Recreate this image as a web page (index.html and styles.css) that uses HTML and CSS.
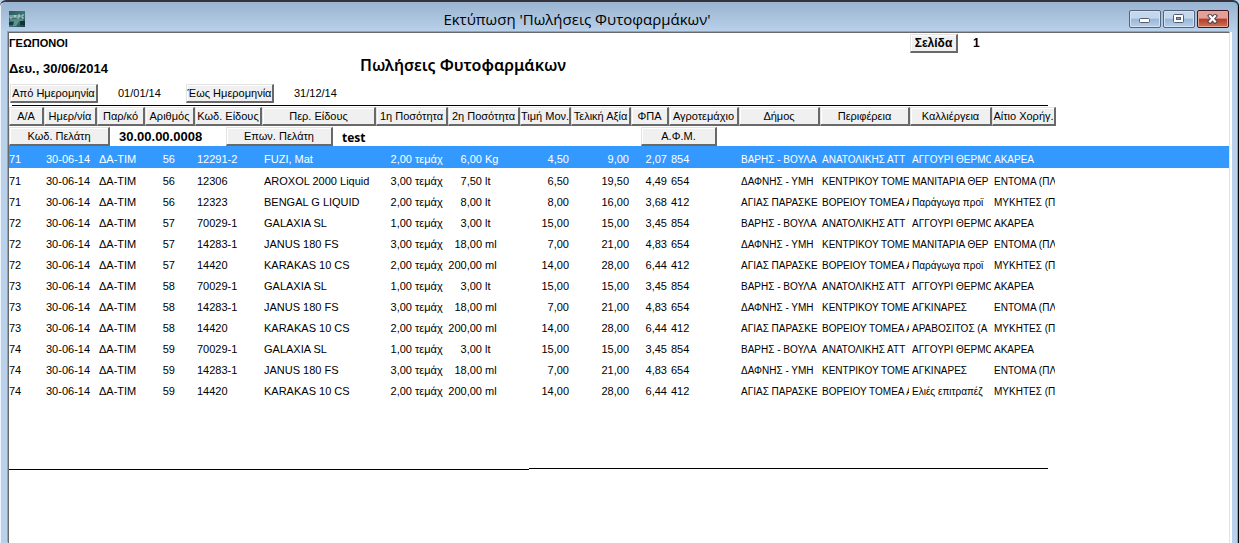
FILE: index.html
```html
<!DOCTYPE html>
<html lang="el">
<head>
<meta charset="utf-8">
<title>Εκτύπωση 'Πωλήσεις Φυτοφαρμάκων'</title>
<link rel="stylesheet" href="styles.css">
</head>
<body>
<div class="window">
  <header class="titlebar">
    <svg class="app-icon" viewBox="0 0 16 16" aria-hidden="true">
      <defs><linearGradient id="g" x1="0" y1="0" x2="1" y2="1"><stop offset="0" stop-color="#2c5b5c"/><stop offset=".6" stop-color="#3f7778"/><stop offset="1" stop-color="#123c40"/></linearGradient></defs>
      <rect width="16" height="16" fill="url(#g)"/>
      <path d="M0 11h5v3H0z" fill="#143f43"/><path d="M5 10h5l-3 5H4z" fill="#5f9492"/><path d="M11 10h5v4h-5z" fill="#0f3438"/>
      <path d="M1 4v3h2V4M5 7V4l1 2 1-2v3M9 8V4h2v2H9M13 4v3h2M13 4h2" fill="none" stroke="#b9cfce"/>
      <path d="M1 9h13" stroke="#7fa5a4"/>
    </svg>
    <h1 class="window-title">Εκτύπωση 'Πωλήσεις Φυτοφαρμάκων'</h1>
    <div class="window-controls">
      <button class="control" aria-label="Ελαχιστοποίηση"><svg viewBox="0 0 12 10"><rect x=".5" y="4.5" width="10" height="4" rx="1" fill="#fff" stroke="#555c6b"/></svg></button>
      <button class="control" aria-label="Μεγιστοποίηση"><svg viewBox="0 0 12 10"><rect x=".5" y=".5" width="10" height="8" rx="1" fill="#fff" stroke="#555c6b"/><rect x="3.500" y="3.500" width="4" height="2" fill="#7fa4cc" stroke="#555c6b"/></svg></button>
      <button class="control close" aria-label="Κλείσιμο"><svg viewBox="0 0 12 10"><path d="M3 2l5 5.500M8 2l-5 5.500" stroke="#4b4652" stroke-width="4.200" stroke-linecap="square"/><path d="M3 2l5 5.500M8 2l-5 5.500" stroke="#fff" stroke-width="2.200" stroke-linecap="square"/></svg></button>
    </div>
  </header>
  <main class="report">
    <div class="company-row">
      <strong class="company">ΓΕΩΠΟΝΟΙ</strong>
      <button class="raised page-label">Σελίδα</button>
      <strong class="page-number">1</strong>
    </div>
    <div class="heading-row">
      <strong class="date">Δευ., 30/06/2014</strong>
      <h2 class="report-title">Πωλήσεις Φυτοφαρμάκων</h2>
    </div>
    <div class="period-row">
      <button class="raised period-label">Από Ημερομηνία</button>
      <span class="period-date">01/01/14</span>
      <button class="raised period-label">Έως Ημερομηνία</button>
      <span class="period-date">31/12/14</span>
    </div>
    <hr class="rule top-rule">
    <table class="sales">
      <colgroup>
        <col class="c-aa"><col class="c-date"><col class="c-doc"><col class="c-num"><col class="c-code"><col class="c-name"><col class="c-qty"><col class="c-qty"><col class="c-price"><col class="c-total"><col class="c-vat"><col class="c-plot"><col class="c-town"><col class="c-region"><col class="c-crop"><col class="c-cause"><col>
      </colgroup>
      <thead>
        <tr>
          <th><button class="raised">Α/Α</button></th>
          <th><button class="raised">Ημερ/νία</button></th>
          <th><button class="raised">Παρ/κό</button></th>
          <th><button class="raised">Αριθμός</button></th>
          <th><button class="raised">Κωδ. Είδους</button></th>
          <th><button class="raised">Περ. Είδους</button></th>
          <th><button class="raised">1η Ποσότητα</button></th>
          <th><button class="raised">2η Ποσότητα</button></th>
          <th><button class="raised">Τιμή Μον.</button></th>
          <th><button class="raised">Τελική Αξία</button></th>
          <th><button class="raised">ΦΠΑ</button></th>
          <th><button class="raised">Αγροτεμάχιο</button></th>
          <th><button class="raised">Δήμος</button></th>
          <th><button class="raised">Περιφέρεια</button></th>
          <th><button class="raised">Καλλιέργεια</button></th>
          <th><button class="raised">Αίτιο Χορήγ.</button></th>
          <th></th>
        </tr>
        <tr class="client">
          <th colspan="17">
            <div class="client-row">
              <button class="raised client-code-label">Κωδ. Πελάτη</button>
              <strong class="client-code">30.00.00.0008</strong>
              <button class="raised client-name-label">Επων. Πελάτη</button>
              <strong class="client-name">test</strong>
              <button class="raised tax-label">Α.Φ.Μ.</button>
            </div>
          </th>
        </tr>
      </thead>
      <tbody>
        <tr class="selected"><td>71</td><td>30-06-14</td><td>ΔΑ-ΤΙΜ</td><td class="doc-no">56</td><td>12291-2</td><td>FUZI, Mat</td><td><span class="amount">2,00</span>τεμάχ</td><td class="second"><span class="amount">6,00</span>Kg</td><td class="num">4,50</td><td class="num">9,00</td><td class="num">2,07</td><td>854</td><td class="place">ΒΑΡΗΣ - ΒΟΥΛΑ</td><td class="place">ΑΝΑΤΟΛΙΚΗΣ ΑΤΤ</td><td class="place">ΑΓΓΟΥΡΙ ΘΕΡΜΟ</td><td class="place">ΑΚΑΡΕΑ</td><td></td></tr>
        <tr><td>71</td><td>30-06-14</td><td>ΔΑ-ΤΙΜ</td><td class="doc-no">56</td><td>12306</td><td>AROXOL 2000 Liquid</td><td><span class="amount">3,00</span>τεμάχ</td><td class="second"><span class="amount">7,50</span>lt</td><td class="num">6,50</td><td class="num">19,50</td><td class="num">4,49</td><td>654</td><td class="place">ΔΑΦΝΗΣ - ΥΜΗ</td><td class="place">ΚΕΝΤΡΙΚΟΥ ΤΟΜΕ</td><td class="place">ΜΑΝΙΤΑΡΙΑ ΘΕΡ</td><td class="place">ΕΝΤΟΜΑ (ΠΛ</td><td></td></tr>
        <tr><td>71</td><td>30-06-14</td><td>ΔΑ-ΤΙΜ</td><td class="doc-no">56</td><td>12323</td><td>BENGAL G LIQUID</td><td><span class="amount">2,00</span>τεμάχ</td><td class="second"><span class="amount">8,00</span>lt</td><td class="num">8,00</td><td class="num">16,00</td><td class="num">3,68</td><td>412</td><td class="place">ΑΓΙΑΣ ΠΑΡΑΣΚΕ</td><td class="place">ΒΟΡΕΙΟΥ ΤΟΜΕΑ Α</td><td class="place">Παράγωγα προϊ</td><td class="place">ΜΥΚΗΤΕΣ (Π</td><td></td></tr>
        <tr><td>72</td><td>30-06-14</td><td>ΔΑ-ΤΙΜ</td><td class="doc-no">57</td><td>70029-1</td><td>GALAXIA SL</td><td><span class="amount">1,00</span>τεμάχ</td><td class="second"><span class="amount">3,00</span>lt</td><td class="num">15,00</td><td class="num">15,00</td><td class="num">3,45</td><td>854</td><td class="place">ΒΑΡΗΣ - ΒΟΥΛΑ</td><td class="place">ΑΝΑΤΟΛΙΚΗΣ ΑΤΤ</td><td class="place">ΑΓΓΟΥΡΙ ΘΕΡΜΟ</td><td class="place">ΑΚΑΡΕΑ</td><td></td></tr>
        <tr><td>72</td><td>30-06-14</td><td>ΔΑ-ΤΙΜ</td><td class="doc-no">57</td><td>14283-1</td><td>JANUS 180 FS</td><td><span class="amount">3,00</span>τεμάχ</td><td class="second"><span class="amount">18,00</span>ml</td><td class="num">7,00</td><td class="num">21,00</td><td class="num">4,83</td><td>654</td><td class="place">ΔΑΦΝΗΣ - ΥΜΗ</td><td class="place">ΚΕΝΤΡΙΚΟΥ ΤΟΜΕ</td><td class="place">ΜΑΝΙΤΑΡΙΑ ΘΕΡ</td><td class="place">ΕΝΤΟΜΑ (ΠΛ</td><td></td></tr>
        <tr><td>72</td><td>30-06-14</td><td>ΔΑ-ΤΙΜ</td><td class="doc-no">57</td><td>14420</td><td>KARAKAS 10 CS</td><td><span class="amount">2,00</span>τεμάχ</td><td class="second"><span class="amount">200,00</span>ml</td><td class="num">14,00</td><td class="num">28,00</td><td class="num">6,44</td><td>412</td><td class="place">ΑΓΙΑΣ ΠΑΡΑΣΚΕ</td><td class="place">ΒΟΡΕΙΟΥ ΤΟΜΕΑ Α</td><td class="place">Παράγωγα προϊ</td><td class="place">ΜΥΚΗΤΕΣ (Π</td><td></td></tr>
        <tr><td>73</td><td>30-06-14</td><td>ΔΑ-ΤΙΜ</td><td class="doc-no">58</td><td>70029-1</td><td>GALAXIA SL</td><td><span class="amount">1,00</span>τεμάχ</td><td class="second"><span class="amount">3,00</span>lt</td><td class="num">15,00</td><td class="num">15,00</td><td class="num">3,45</td><td>854</td><td class="place">ΒΑΡΗΣ - ΒΟΥΛΑ</td><td class="place">ΑΝΑΤΟΛΙΚΗΣ ΑΤΤ</td><td class="place">ΑΓΓΟΥΡΙ ΘΕΡΜΟ</td><td class="place">ΑΚΑΡΕΑ</td><td></td></tr>
        <tr><td>73</td><td>30-06-14</td><td>ΔΑ-ΤΙΜ</td><td class="doc-no">58</td><td>14283-1</td><td>JANUS 180 FS</td><td><span class="amount">3,00</span>τεμάχ</td><td class="second"><span class="amount">18,00</span>ml</td><td class="num">7,00</td><td class="num">21,00</td><td class="num">4,83</td><td>654</td><td class="place">ΔΑΦΝΗΣ - ΥΜΗ</td><td class="place">ΚΕΝΤΡΙΚΟΥ ΤΟΜΕ</td><td class="place">ΑΓΚΙΝΑΡΕΣ</td><td class="place">ΕΝΤΟΜΑ (ΠΛ</td><td></td></tr>
        <tr><td>73</td><td>30-06-14</td><td>ΔΑ-ΤΙΜ</td><td class="doc-no">58</td><td>14420</td><td>KARAKAS 10 CS</td><td><span class="amount">2,00</span>τεμάχ</td><td class="second"><span class="amount">200,00</span>ml</td><td class="num">14,00</td><td class="num">28,00</td><td class="num">6,44</td><td>412</td><td class="place">ΑΓΙΑΣ ΠΑΡΑΣΚΕ</td><td class="place">ΒΟΡΕΙΟΥ ΤΟΜΕΑ Α</td><td class="place">ΑΡΑΒΟΣΙΤΟΣ (Α</td><td class="place">ΜΥΚΗΤΕΣ (Π</td><td></td></tr>
        <tr><td>74</td><td>30-06-14</td><td>ΔΑ-ΤΙΜ</td><td class="doc-no">59</td><td>70029-1</td><td>GALAXIA SL</td><td><span class="amount">1,00</span>τεμάχ</td><td class="second"><span class="amount">3,00</span>lt</td><td class="num">15,00</td><td class="num">15,00</td><td class="num">3,45</td><td>854</td><td class="place">ΒΑΡΗΣ - ΒΟΥΛΑ</td><td class="place">ΑΝΑΤΟΛΙΚΗΣ ΑΤΤ</td><td class="place">ΑΓΓΟΥΡΙ ΘΕΡΜΟ</td><td class="place">ΑΚΑΡΕΑ</td><td></td></tr>
        <tr><td>74</td><td>30-06-14</td><td>ΔΑ-ΤΙΜ</td><td class="doc-no">59</td><td>14283-1</td><td>JANUS 180 FS</td><td><span class="amount">3,00</span>τεμάχ</td><td class="second"><span class="amount">18,00</span>ml</td><td class="num">7,00</td><td class="num">21,00</td><td class="num">4,83</td><td>654</td><td class="place">ΔΑΦΝΗΣ - ΥΜΗ</td><td class="place">ΚΕΝΤΡΙΚΟΥ ΤΟΜΕ</td><td class="place">ΑΓΚΙΝΑΡΕΣ</td><td class="place">ΕΝΤΟΜΑ (ΠΛ</td><td></td></tr>
        <tr><td>74</td><td>30-06-14</td><td>ΔΑ-ΤΙΜ</td><td class="doc-no">59</td><td>14420</td><td>KARAKAS 10 CS</td><td><span class="amount">2,00</span>τεμάχ</td><td class="second"><span class="amount">200,00</span>ml</td><td class="num">14,00</td><td class="num">28,00</td><td class="num">6,44</td><td>412</td><td class="place">ΑΓΙΑΣ ΠΑΡΑΣΚΕ</td><td class="place">ΒΟΡΕΙΟΥ ΤΟΜΕΑ Α</td><td class="place">Ελιές επιτραπέζ</td><td class="place">ΜΥΚΗΤΕΣ (Π</td><td></td></tr>
      </tbody>
    </table>
    <div class="bottom-rules"><hr class="rule"><hr class="rule"></div>
  </main>
</div>
</body>
</html>
```
FILE: styles.css
```css
* { box-sizing: border-box; }

body {
  margin: 0;
  background: #b9d1ea;
  color: #000;
  font: 11px/13px "Liberation Sans", Arial, sans-serif;
}

.window {
  display: flex;
  flex-direction: column;
  min-height: 100vh;
  padding: 0 8px;
  border-top: 2px solid #35333b;
  border-right: 1px solid #000;
  border-radius: 6px 6px 0 0;
  background: linear-gradient(#99b4d1, #b9d1ea 30px);
  box-shadow: inset -1px 0 #36c5e0, inset 1px 0 #eef4fb;
}

.titlebar {
  display: flex;
  align-items: center;
  height: 30px;
  padding-left: 1px;
}

.app-icon { width: 16px; height: 16px; margin-top: 4px; }

.window-title {
  flex: 1;
  margin: 4px 0 0;
  font: 15px/20px "Open Sans", "Noto Sans", sans-serif;
  text-align: center;
}

.window-controls {
  display: flex;
  gap: 2px;
  margin-top: 4px;
  padding-right: 1px;
}

.control {
  display: flex;
  align-items: center;
  justify-content: center;
  width: 32px;
  height: 18px;
  padding: 0;
  border: 1px solid #55647c;
  border-radius: 2px;
  background: linear-gradient(#c4d8ed 45%, #98b6d7 50%, #b5d0ea);
  box-shadow: inset 0 0 0 1px #d4e3f3;
}

.control svg { width: 12px; height: 10px; }

.close {
  border-color: #431422;
  background: linear-gradient(#e2a197 45%, #b63a24 50%, #cf7357);
  box-shadow: inset 0 0 0 1px #e5a899;
}

.report {
  flex: 1;
  background: #fff;
  border-top: 1px solid #696969;
  border-left: 1px solid #696969;
  border-right: 1px solid #e3e3e3;
  box-shadow: -1px -1px #a0a0a0, 2px 0 #fff;
}

.raised {
  height: 19px;
  padding: 0;
  overflow: hidden;
  border: 2px solid;
  border-width: 1px 2px 2px 1px;
  border-color: #e3e3e3 #696969 #696969 #e3e3e3;
  background: #f0f0f0;
  box-shadow: inset 1px 1px #fff;
  color: #000;
  font: 11px/14px "Liberation Sans", Arial, sans-serif;
  white-space: nowrap;
}

.company-row {
  display: flex;
  align-items: center;
  height: 20px;
}

.company { width: 901px; }
.page-label { width: 48px; margin-right: 15px; font-size: 12px; font-weight: bold; }
.page-number { font-size: 12px; }

.heading-row {
  display: flex;
  align-items: center;
  height: 30px;
}

.date { width: 351px; font-size: 13px; }

.report-title {
  margin: 0;
  padding-bottom: 6px;
  font: 600 16px/20px "Noto Sans", "Open Sans", sans-serif;
}

.period-row {
  display: flex;
  align-items: center;
  height: 21px;
  padding-left: 1px;
}

.period-label { width: 88px; }
.period-date { width: 88px; padding-left: 20px; }

.rule {
  height: 1px;
  margin: 0;
  border: 0;
  background: #000;
}

.top-rule { max-width: 1036px; margin: 1px 0 1px 3px; }

.sales {
  width: 100%;
  border-collapse: separate;
  border-spacing: 0;
  table-layout: fixed;
}

.c-aa { width: 35px; }
.c-date { width: 53px; }
.c-doc { width: 48px; }
.c-num { width: 50px; }
.c-code { width: 67px; }
.c-name { width: 114px; }
.c-qty { width: 72px; }
.c-price { width: 51px; }
.c-total { width: 60px; }
.c-vat { width: 38px; }
.c-plot { width: 70px; }
.c-town { width: 81px; }
.c-region { width: 90px; }
.c-crop { width: 82px; }
.c-cause { width: 64px; }

.sales th { height: 20px; padding: 0; font-weight: normal; text-align: left; vertical-align: top; }
.sales .client th { height: 19px; }
.sales th > .raised { display: block; width: 100%; }

.sales td {
  height: 21px;
  padding: 7px 0 1px 2px;
  overflow: hidden;
  border-right: 2px solid transparent;
  white-space: nowrap;
}

.sales td:first-child { padding-left: 0; }
.sales .selected { background: #3399ff; color: #fff; }
.sales .selected td { height: 22px; padding-bottom: 2px; }
.sales .num { text-align: right; }
.sales .doc-no { padding-right: 18px; text-align: right; }
.sales .place { border-right-width: 1px; font-size: 10px; }

.amount { display: inline-block; width: 34px; margin-right: 3px; text-align: right; }
.sales .second { padding-left: 0; }

.client-row { display: flex; align-items: center; }
.client-code-label { width: 101px; margin-right: 9px; }
.client-code { width: 107px; font-size: 13px; }
.client-name-label { width: 107px; }
.client-name { width: 308px; padding: 3px 0 0 9px; font: bold 12px/14px "Open Sans", sans-serif; }
.client-row .tax-label { width: 76px; }

.bottom-rules { display: flex; align-items: flex-end; max-width: 1039px; margin-top: 69px; }
.bottom-rules .rule { flex: 1; }
.bottom-rules .rule:last-child { margin-bottom: 1px; }
```
